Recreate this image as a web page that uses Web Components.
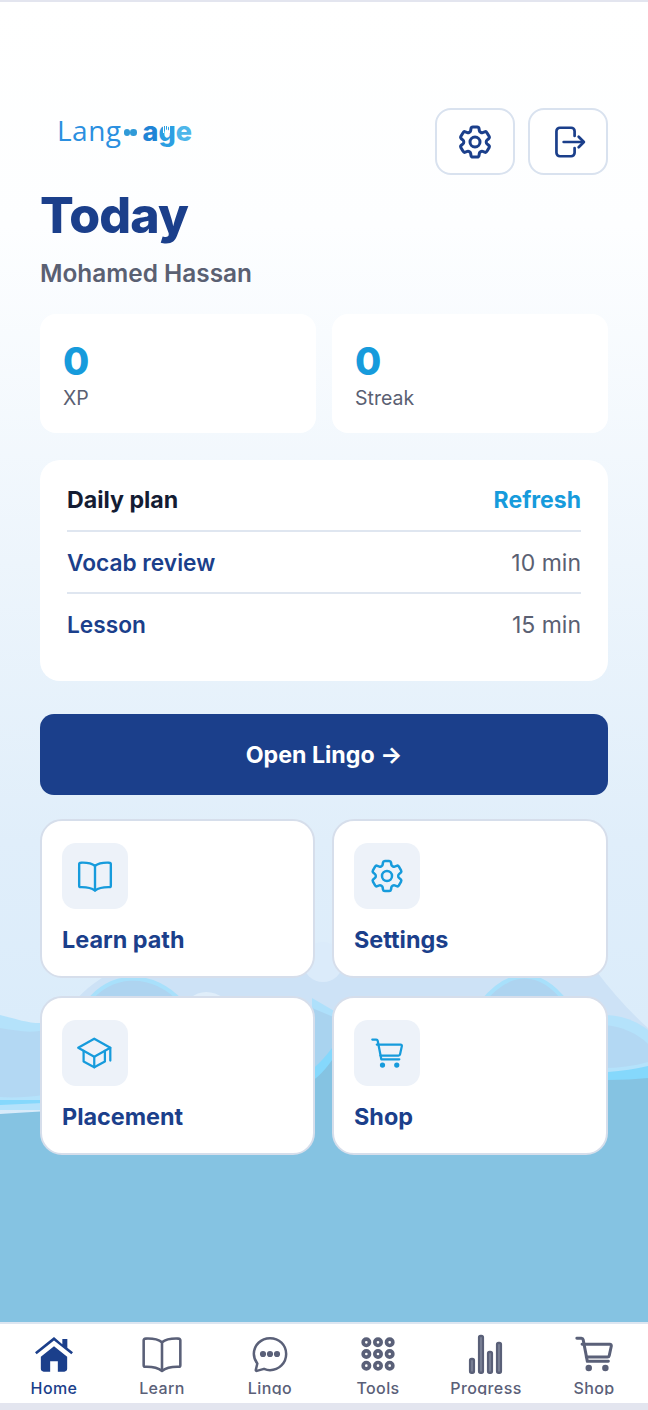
<!DOCTYPE html>
<html lang="en">
<head>
<meta charset="utf-8">
<title>Today</title>
<style>
    html, body { margin: 0; padding: 0; background: #e3e5ef; }
    body { font-family: Inter, "Liberation Sans", sans-serif; }
</style>
</head>
<body>
<today-screen></today-screen>

<script>
const ICONS = {
    gear: `<path d="M9.594 3.94c.09-.542.56-.94 1.11-.94h2.593c.55 0 1.02.398 1.11.94l.213 1.281c.063.374.313.686.645.87.074.04.147.083.22.127.325.196.72.257 1.075.124l1.217-.456a1.125 1.125 0 0 1 1.37.49l1.296 2.247a1.125 1.125 0 0 1-.26 1.431l-1.003.827c-.293.241-.438.613-.43.992a7.723 7.723 0 0 1 0 .255c-.008.378.137.75.43.991l1.004.827c.424.35.534.955.26 1.43l-1.298 2.247a1.125 1.125 0 0 1-1.369.491l-1.217-.456c-.355-.133-.75-.072-1.076.124a6.47 6.47 0 0 1-.22.128c-.331.183-.581.495-.644.869l-.213 1.281c-.09.543-.56.94-1.11.94h-2.594c-.55 0-1.019-.398-1.11-.94l-.213-1.281c-.062-.374-.312-.686-.644-.87a6.52 6.52 0 0 1-.22-.127c-.325-.196-.72-.257-1.076-.124l-1.217.456a1.125 1.125 0 0 1-1.369-.49l-1.297-2.247a1.125 1.125 0 0 1 .26-1.431l1.004-.827c.292-.24.437-.613.43-.991a6.932 6.932 0 0 1 0-.255c.007-.38-.138-.751-.43-.992l-1.004-.827a1.125 1.125 0 0 1-.26-1.43l1.297-2.247a1.125 1.125 0 0 1 1.37-.491l1.216.456c.356.133.751.072 1.076-.124.072-.044.146-.086.22-.128.332-.183.582-.495.644-.869l.214-1.28Z"/><circle cx="12" cy="12" r="3"/>`,
    book: `<path d="M12 5.6C10 4 7 3.4 2.9 3.6a.9.9 0 0 0-.9.9v13.6c0 .5.4.9.9.9 3.9-.1 6.9.5 9.1 2.2 2.2-1.7 5.2-2.3 9.1-2.2.5 0 .9-.4.9-.9V4.500a.9.9 0 0 0-.9-.9C17 3.4 14 4 12 5.6Z"/><path d="M12 5.6V21"/>`,
    cart: `<path d="M2.2 3h2.600c.5 0 .9.3 1 .8L8.200 16.200h12"/><path d="M5.200 6.400h15.900c.5 0 .9.5.8 1l-1.200 5.500c-.1.5-.5.8-1 .8H7.600"/><circle cx="9" cy="20" r="1" fill="currentColor"/><circle cx="18.500" cy="20" r="1" fill="currentColor"/>`,
    logout: `<g transform="translate(1.600 0)"><path d="M14.800 8V4.800a2.300 2.300 0 0 0-2.300-2.300H5a2.300 2.300 0 0 0-2.300 2.300v14.400A2.300 2.300 0 0 0 5 21.500h7.500a2.300 2.300 0 0 0 2.300-2.300V16"/><path d="M7.500 12h13"/><path d="M17.500 8.500 21 12l-3.500 3.500"/></g>`,
    cap: `<path d="M11.500 2.500.8 8.500l10.700 6 10.700-6-10.700-6Z"/><path d="M4.400 10.600v7L11.500 21.500l7.100-3.900v-7"/><path d="M11.500 14.500v7"/><path d="M22.200 8.500V17"/>`,
    home: `<path fill="currentColor" stroke="none" d="M12 7.300 4.100 13.700v7.200c0 1 .7 1.700 1.700 1.700h3.900v-6.300h4.600v6.300h3.900c1 0 1.700-.7 1.700-1.700v-7.200L12 7.300Z"/><path fill="currentColor" stroke="none" d="M12 1.800.6 11l1 1.200L12 3.900l10.400 8.300 1-1.200-3.400-2.700V3h-3v3.200L12 1.800Z"/>`,
    chat: `<path d="M12 2.500c-5.400 0-9.700 4.200-9.700 9.400 0 2.200.8 4.200 2.100 5.800l-.9 3.800c-.1.4.2.7.6.6l4.300-1.200c1.200.5 2.300.8 3.600.8 5.400 0 9.700-4.300 9.700-9.700S17.400 2.500 12 2.500Z"/><circle cx="7.800" cy="12" r="1.100" fill="currentColor"/><circle cx="12" cy="12" r="1.100" fill="currentColor"/><circle cx="16.200" cy="12" r="1.100" fill="currentColor"/>`,
    tools: [5, 12, 19].flatMap(y => [5, 12, 19].map(x => `<circle cx="${x}" cy="${y}" r="1.900"/>`)).join(''),
    progress: `<g fill="#8d93a6"><rect x="2.500" y="15" width="2.200" height="8.200" rx=".8"/><rect x="7.900" y="1.200" width="2.200" height="22" rx=".8"/><rect x="13.300" y="10.800" width="2.200" height="12.400" rx=".8"/><rect x="18.700" y="5.400" width="2.200" height="17.800" rx=".8"/></g>`
};

class AppIcon extends HTMLElement {
    connectedCallback() {
        const name = this.getAttribute('name');
        const size = this.getAttribute('size') || 24;
        const weight = this.getAttribute('weight') || 1.8;
        this.attachShadow({ mode: 'open' });
        this.shadowRoot.innerHTML = `
            <style>
                :host { display: block; flex: none; width: ${size}px; height: ${size}px; }
                svg { display: block; width: 100%; height: 100%; overflow: visible; }
            </style>
            <svg viewBox="0 0 24 24" fill="none" stroke="currentColor" stroke-width="${weight}"
                stroke-linecap="round" stroke-linejoin="round">${ICONS[name]}</svg>
        `;
    }
}
customElements.define('app-icon', AppIcon);

class BrandLogo extends HTMLElement {
    connectedCallback() {
        this.attachShadow({ mode: 'open' });
        this.shadowRoot.innerHTML = `
            <style>
                :host { display: flex; align-items: baseline; height: 32px; line-height: 32px; color: #2a8fe0; }
                .lang { font: 400 28px/32px "Open Sans", sans-serif; letter-spacing: 0.5px; }
                .dots { display: flex; margin: 0 6px 0 2px; align-self: center; padding-top: 5px; }
                .dots i { display: block; width: 6.500px; height: 6.500px; border-radius: 50%; background: #2f9ad8; }
                .age { font: 800 27px/32px Inter, sans-serif; }
                .a { color: #1f84d6; } .e { color: #4db6ea; }
                .g { position: relative; color: #2b9ee2; }
                .g::after {
                    content: ""; position: absolute; left: 5px; top: 10px; width: 7px; height: 8px;
                    background: repeating-linear-gradient(90deg, #fff 0 1px, transparent 1px 2px);
                }
            </style>
            <span class="lang">Lang</span>
            <span class="dots"><i></i><i></i></span>
            <span class="age"><span class="a">a</span><span class="g">g</span><span class="e">e</span></span>
        `;
    }
}
customElements.define('brand-logo', BrandLogo);

class IconButton extends HTMLElement {
    connectedCallback() {
        this.attachShadow({ mode: 'open' });
        this.shadowRoot.innerHTML = `
            <style>
                :host {
                    display: flex; align-items: center; justify-content: center;
                    width: 80px; height: 67px; box-sizing: border-box;
                    background: rgba(255, 255, 255, 0.85); border: 2px solid #d9e2ef; border-radius: 16px;
                    color: #1b3f8b;
                }
            </style>
            <app-icon name="${this.getAttribute('icon')}" size="${this.getAttribute('size') || 36}" weight="1.800"></app-icon>
        `;
    }
}
customElements.define('icon-button', IconButton);

class StatCard extends HTMLElement {
    connectedCallback() {
        this.attachShadow({ mode: 'open' });
        this.shadowRoot.innerHTML = `
            <style>
                :host {
                    display: block; box-sizing: border-box; height: 119px; padding: 26px 23px 0;
                    background: #fff; border-radius: 16px;
                }
                .value { font-size: 38px; line-height: 42px; font-weight: 800; color: #169bdc; }
                .label { font-size: 19.500px; line-height: 28px; margin-top: 2px; color: #5a6072; }
            </style>
            <div class="value">${this.getAttribute('value')}</div>
            <div class="label">${this.getAttribute('label')}</div>
        `;
    }
}
customElements.define('stat-card', StatCard);

class PlanRow extends HTMLElement {
    connectedCallback() {
        const divided = this.hasAttribute('divided');
        this.attachShadow({ mode: 'open' });
        this.shadowRoot.innerHTML = `
            <style>
                :host {
                    display: flex; justify-content: space-between; align-items: center;
                    height: 60px; font-size: 23px; line-height: 28px; box-sizing: border-box;
                }
                :host([divided]) { height: 62px; padding-top: 2px; border-top: 2px solid #dfe6f0; }
                .name { font-weight: 600; font-size: 22.700px; color: #1b3f8b; }
                .time { color: #5a6072; }
                .title { font-weight: 700; font-size: 23.200px; color: #141c33; }
                .action { font-weight: 650; color: #169bdc; }
            </style>
            <span class="${divided ? 'name' : 'title'}">${this.getAttribute('name')}</span>
            <span class="${divided ? 'time' : 'action'}">${this.getAttribute('detail')}</span>
        `;
    }
}
customElements.define('plan-row', PlanRow);

class PlanCard extends HTMLElement {
    constructor() {
        super();
        this.attachShadow({ mode: 'open' });
        this.shadowRoot.innerHTML = `
            <style>
                :host {
                    display: block; box-sizing: border-box; height: 221px; padding: 10px 27px 0;
                    background: #fff; border-radius: 20px;
                }
            </style>
            <slot></slot>
        `;
    }
}
customElements.define('plan-card', PlanCard);

class ActionCard extends HTMLElement {
    connectedCallback() {
        this.attachShadow({ mode: 'open' });
        this.shadowRoot.innerHTML = `
            <style>
                :host {
                    display: block; box-sizing: border-box; height: 159px; padding: 22px 20px 0;
                    background: #fff; border: 2px solid #d6deeb; border-radius: 22px;
                }
                .tile {
                    display: flex; align-items: center; justify-content: center;
                    width: 66px; height: 66px; border-radius: 14px; background: #edf2f9; color: #169bdc;
                }
                .label { margin-top: 16px; font-size: 23.400px; line-height: 30px; font-weight: 700; color: #1b3f8b; }
            </style>
            <div class="tile"><app-icon name="${this.getAttribute('icon')}" size="${this.getAttribute('size') || 36}" weight="1.500"></app-icon></div>
            <div class="label">${this.getAttribute('label')}</div>
        `;
    }
}
customElements.define('action-card', ActionCard);

class NavItem extends HTMLElement {
    connectedCallback() {
        this.attachShadow({ mode: 'open' });
        this.shadowRoot.innerHTML = `
            <style>
                :host {
                    display: flex; flex-direction: column; align-items: center;
                    color: #5a6078; padding-top: 10px; height: 71px; overflow: hidden; box-sizing: border-box;
                }
                :host([active]) { color: #1b3f8b; }
                .icon { display: flex; align-items: center; justify-content: center; height: 40px; }
                .label { margin-top: 4px; font-size: 16px; line-height: 20px; font-weight: 500; letter-spacing: 0.4px; }
            </style>
            <div class="icon">
                <app-icon name="${this.getAttribute('icon')}" size="${this.getAttribute('size') || 40}" weight="${this.getAttribute('weight') || 1.500}"></app-icon>
            </div>
            <div class="label">${this.getAttribute('label')}</div>
        `;
    }
}
customElements.define('nav-item', NavItem);

class BottomNav extends HTMLElement {
    constructor() {
        super();
        this.attachShadow({ mode: 'open' });
        this.shadowRoot.innerHTML = `
            <style>
                :host {
                    display: grid; grid-template-columns: repeat(6, 108px); height: 81px; box-sizing: border-box;
                    background: #fff; border-top: 2px solid #dde6f1;
                }
            </style>
            <slot></slot>
        `;
    }
}
customElements.define('bottom-nav', BottomNav);

class WaveBackdrop extends HTMLElement {
    connectedCallback() {
        this.attachShadow({ mode: 'open' });
        this.shadowRoot.innerHTML = `
            <style>
                :host { position: absolute; inset: 0; display: block; pointer-events: none; }
                svg { display: block; width: 100%; height: 100%; }
            </style>
            <svg viewBox="0 2 648 1401" preserveAspectRatio="none">
                <defs>
                    <linearGradient id="sky" x1="0" y1="0" x2="0" y2="1">
                        <stop offset="0" stop-color="#ffffff"/>
                        <stop offset="0.2" stop-color="#fdfeff"/>
                        <stop offset="0.5" stop-color="#edf5fc"/>
                        <stop offset="0.75" stop-color="#e0eefa"/>
                        <stop offset="1" stop-color="#d8ebfa"/>
                    </linearGradient>
                </defs>
                <rect y="2" width="648" height="1120" fill="url(#sky)"/>
                <!-- centre band behind the cards -->
                <path d="M76 1000C86 988 98 980 112 972L597 972C612 992 630 1012 648 1028V1110H76Z" fill="#cde2f6"/>
                <circle cx="323" cy="962" r="20" fill="#dbebfa"/>
                <!-- domes above the lower cards -->
                <path d="M88 1002C108 974 150 968 182 1002Z" fill="#aed4f0" stroke="#a8e0fb" stroke-width="4"/>
                <path d="M482 1002C510 968 540 968 566 1002Z" fill="#aed4f0" stroke="#a8e0fb" stroke-width="4"/>
                <path d="M190 998C200 990 212 990 224 998Z" fill="#e0eefa"/>
                <!-- left swell -->
                <path d="M0 1015C14 1018 28 1024 44 1023V1110H0Z" fill="#b4e2fb"/>
                <path d="M0 1028C14 1030 30 1034 44 1030V1095C30 1097 14 1098 0 1097Z" fill="#b3d8f3"/>
                <!-- right swell -->
                <path d="M648 1030C635 1020 620 1015 604 1015V1090H648Z" fill="#b4e2fb"/>
                <path d="M604 1025C622 1026 638 1034 648 1044V1062C634 1066 618 1068 604 1068Z" fill="#b3d8f3"/>
                <!-- gap between the lower cards -->
                <path d="M312 1000L336 1014V1090H312Z" fill="#a9d3ef"/>
                <path d="M312 998L336 1012L336 1018L312 1008Z" fill="#aee0fb"/>
                <!-- bright crest and deep water -->
                <path d="M0 1105C70 1102 150 1098 230 1096C275 1094 305 1084 332 1048C400 1064 520 1072 608 1072C622 1071 636 1069 648 1066V1100H0Z" fill="#85d8fc"/>
                <path d="M0 1114C60 1110 150 1106 230 1104C280 1102 312 1090 332 1060C400 1072 520 1080 608 1080C622 1080 636 1079 648 1078V1403H0Z" fill="#85c3e2"/>
            </svg>
        `;
    }
}
customElements.define('wave-backdrop', WaveBackdrop);

class TodayScreen extends HTMLElement {
    connectedCallback() {
        this.attachShadow({ mode: 'open' });
        this.shadowRoot.innerHTML = `
            <style>
                :host {
                    display: flex; flex-direction: column; position: relative; height: 1403px;
                    border-top: 2px solid #e3e5ef; box-sizing: border-box; overflow: hidden;
                    font-family: Inter, "Liberation Sans", sans-serif;
                }
                main { position: relative; flex: 1; padding: 106px 40px 0; box-sizing: border-box; }
                .top { display: flex; justify-content: space-between; align-items: flex-start; }
                brand-logo { margin: 6px 0 0 17px; }
                .actions { display: flex; gap: 13px; }
                h1 { margin: 6px 0 0; font-size: 50px; line-height: 68px; font-weight: 800; letter-spacing: -0.8px; color: #1b3f8b; }
                .user { margin-top: 8px; font-size: 24.400px; line-height: 32px; font-weight: 600; color: #5a6072; }
                .stats { display: grid; grid-template-columns: 276px 276px; gap: 16px; margin-top: 25px; }
                plan-card { margin-top: 27px; }
                .open {
                    display: flex; align-items: center; justify-content: center; height: 81px; margin-top: 33px;
                    background: #1b3f8b; border-radius: 14px; color: #fff; font-size: 23.200px; font-weight: 700;
                }
                .grid { display: grid; grid-template-columns: 275px 276px; column-gap: 17px; row-gap: 18px; margin-top: 24px; }
                bottom-nav { position: relative; }
            </style>
            <wave-backdrop></wave-backdrop>
            <main>
                <div class="top">
                    <brand-logo></brand-logo>
                    <div class="actions">
                        <icon-button icon="gear" size="40"></icon-button>
                        <icon-button icon="logout"></icon-button>
                    </div>
                </div>
                <h1>Today</h1>
                <div class="user">Mohamed Hassan</div>
                <div class="stats">
                    <stat-card value="0" label="XP"></stat-card>
                    <stat-card value="0" label="Streak"></stat-card>
                </div>
                <plan-card>
                    <plan-row name="Daily plan" detail="Refresh"></plan-row>
                    <plan-row divided name="Vocab review" detail="10 min"></plan-row>
                    <plan-row divided name="Lesson" detail="15 min"></plan-row>
                </plan-card>
                <div class="open">Open Lingo →</div>
                <div class="grid">
                    <action-card icon="book" size="38" label="Learn path"></action-card>
                    <action-card icon="gear" size="40" label="Settings"></action-card>
                    <action-card icon="cap" label="Placement"></action-card>
                    <action-card icon="cart" label="Shop"></action-card>
                </div>
            </main>
            <bottom-nav>
                <nav-item active icon="home" label="Home"></nav-item>
                <nav-item icon="book" size="44" weight="1.400" label="Learn"></nav-item>
                <nav-item icon="chat" label="Lingo"></nav-item>
                <nav-item icon="tools" label="Tools" weight="2.200"></nav-item>
                <nav-item icon="progress" label="Progress"></nav-item>
                <nav-item icon="cart" size="42" weight="1.700" label="Shop"></nav-item>
            </bottom-nav>
        `;
    }
}
customElements.define('today-screen', TodayScreen);
</script>
</body>
</html>
